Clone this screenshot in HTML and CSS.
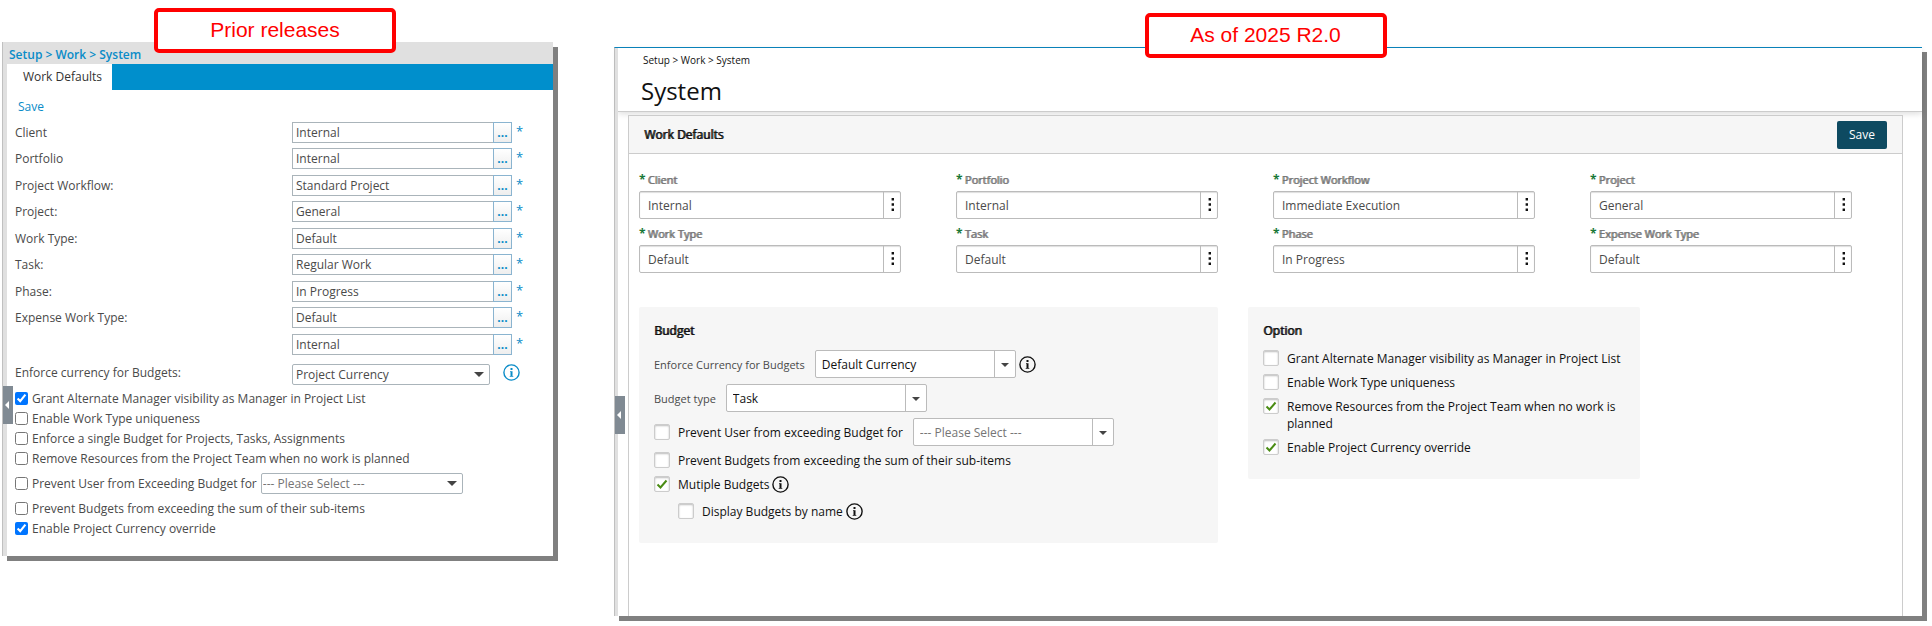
FILE: index.html
```
<!DOCTYPE html>
<html lang="en">
<head>
<meta charset="utf-8">
<title>Work Defaults: release comparison</title>
<link rel="stylesheet" href="styles.css">
</head>
<body>
<svg class="sprite" aria-hidden="true">
  <symbol id="info" viewBox="0 0 17 17">
    <circle cx="8.5" cy="8.5" r="7.600" fill="none" stroke="currentColor" stroke-width="1.4"/>
    <path d="M7.500 4h2v2h-2zM7 7.300h2.500v4.700h.8v.8H6.700V12h.8V8.100H7z" fill="currentColor"/>
  </symbol>
  <symbol id="dots" viewBox="0 0 4 14">
    <path d="M.6 0h2.4v2.6H.6zM.6 5.2h2.4v2.6H.6zM.6 10.4h2.4v2.6H.6z" fill="currentColor"/>
  </symbol>
  <symbol id="left" viewBox="0 0 4 8"><path d="M4 0v8L0 4z" fill="currentColor"/></symbol>
</svg>
<main class="compare">
  <section class="panel old">
    <div class="callout-row"><strong class="callout">Prior releases</strong></div>
    <button class="handle" aria-label="Expand menu"><svg width="4" height="8"><use href="#left"/></svg></button>
    <nav class="old-crumbs">Setup &gt; Work &gt; System</nav>
    <div class="tabs"><button class="tab">Work Defaults</button></div>
    <form class="old-form">
      <a class="save-link" href="#save">Save</a>
      <div class="old-fields">
        <label for="o1">Client</label><div class="old-lookup"><input id="o1" value="Internal"><button type="button" aria-label="Browse clients">...</button><span>*</span></div>
        <label for="o2">Portfolio</label><div class="old-lookup"><input id="o2" value="Internal"><button type="button" aria-label="Browse portfolios">...</button><span>*</span></div>
        <label for="o3">Project Workflow:</label><div class="old-lookup"><input id="o3" value="Standard Project"><button type="button" aria-label="Browse workflows">...</button><span>*</span></div>
        <label for="o4">Project:</label><div class="old-lookup"><input id="o4" value="General"><button type="button" aria-label="Browse projects">...</button><span>*</span></div>
        <label for="o5">Work Type:</label><div class="old-lookup"><input id="o5" value="Default"><button type="button" aria-label="Browse work types">...</button><span>*</span></div>
        <label for="o6">Task:</label><div class="old-lookup"><input id="o6" value="Regular Work"><button type="button" aria-label="Browse tasks">...</button><span>*</span></div>
        <label for="o7">Phase:</label><div class="old-lookup"><input id="o7" value="In Progress"><button type="button" aria-label="Browse phases">...</button><span>*</span></div>
        <label for="o8">Expense Work Type:</label><div class="old-lookup"><input id="o8" value="Default"><button type="button" aria-label="Browse expense work types">...</button><span>*</span></div>
        <span></span><div class="old-lookup"><input aria-label="Expense owner" value="Internal"><button type="button" aria-label="Browse owners">...</button><span>*</span></div>
      </div>
      <div class="old-currency">
        <label for="o10">Enforce currency for Budgets:</label>
        <select id="o10" class="old-select"><option>Project Currency</option></select>
        <svg class="info blue" width="17" height="17"><use href="#info"/></svg>
      </div>
      <div class="old-checks">
        <label><input type="checkbox" checked>Grant Alternate Manager visibility as Manager in Project List</label>
        <label><input type="checkbox">Enable Work Type uniqueness</label>
        <label><input type="checkbox">Enforce a single Budget for Projects, Tasks, Assignments</label>
        <label><input type="checkbox">Remove Resources from the Project Team when no work is planned</label>
        <div class="old-limit"><label><input type="checkbox">Prevent User from Exceeding Budget for</label>
          <select class="old-select empty" aria-label="Budget limit"><option>--- Please Select ---</option></select></div>
        <label><input type="checkbox">Prevent Budgets from exceeding the sum of their sub-items</label>
        <label><input type="checkbox" checked>Enable Project Currency override</label>
      </div>
    </form>
  </section>

  <section class="panel new">
    <div class="callout-row"><strong class="callout">As of 2025 R2.0</strong></div>
    <button class="handle" aria-label="Expand menu"><svg width="4" height="8"><use href="#left"/></svg></button>
    <header class="page-head">
      <nav class="crumbs">Setup &gt; Work &gt; System</nav>
      <h1>System</h1>
    </header>
    <form class="card">
      <div class="card-head"><h2>Work Defaults</h2><button type="button" class="save">Save</button></div>
      <div class="fields">
        <div class="field"><label for="n1"><b>*</b>Client</label><div class="lookup"><input id="n1" value="Internal"><button type="button" aria-label="Browse clients"><svg width="4" height="14"><use href="#dots"/></svg></button></div></div>
        <div class="field"><label for="n2"><b>*</b>Portfolio</label><div class="lookup"><input id="n2" value="Internal"><button type="button" aria-label="Browse portfolios"><svg width="4" height="14"><use href="#dots"/></svg></button></div></div>
        <div class="field"><label for="n3"><b>*</b>Project Workflow</label><div class="lookup"><input id="n3" value="Immediate Execution"><button type="button" aria-label="Browse workflows"><svg width="4" height="14"><use href="#dots"/></svg></button></div></div>
        <div class="field"><label for="n4"><b>*</b>Project</label><div class="lookup"><input id="n4" value="General"><button type="button" aria-label="Browse projects"><svg width="4" height="14"><use href="#dots"/></svg></button></div></div>
        <div class="field"><label for="n5"><b>*</b>Work Type</label><div class="lookup"><input id="n5" value="Default"><button type="button" aria-label="Browse work types"><svg width="4" height="14"><use href="#dots"/></svg></button></div></div>
        <div class="field"><label for="n6"><b>*</b>Task</label><div class="lookup"><input id="n6" value="Default"><button type="button" aria-label="Browse tasks"><svg width="4" height="14"><use href="#dots"/></svg></button></div></div>
        <div class="field"><label for="n7"><b>*</b>Phase</label><div class="lookup"><input id="n7" value="In Progress"><button type="button" aria-label="Browse phases"><svg width="4" height="14"><use href="#dots"/></svg></button></div></div>
        <div class="field"><label for="n8"><b>*</b>Expense Work Type</label><div class="lookup"><input id="n8" value="Default"><button type="button" aria-label="Browse expense work types"><svg width="4" height="14"><use href="#dots"/></svg></button></div></div>
      </div>
      <div class="boxes">
        <section class="box">
          <h3>Budget</h3>
          <div class="line"><label for="b1">Enforce Currency for Budgets</label><select id="b1" class="select"><option>Default Currency</option></select><svg class="info" width="17" height="17"><use href="#info"/></svg></div>
          <div class="line"><label for="b2">Budget type</label><select id="b2" class="select"><option>Task</option></select></div>
          <div class="line"><label class="check"><input type="checkbox">Prevent User from exceeding Budget for</label><select class="select empty" aria-label="Budget limit"><option>--- Please Select ---</option></select></div>
          <div class="checks">
            <label class="check"><input type="checkbox">Prevent Budgets from exceeding the sum of their sub-items</label>
            <div class="with-info"><label class="check"><input type="checkbox" checked>Mutiple Budgets</label><svg class="info" width="17" height="17"><use href="#info"/></svg></div>
            <div class="with-info nested"><label class="check"><input type="checkbox">Display Budgets by name</label><svg class="info" width="17" height="17"><use href="#info"/></svg></div>
          </div>
        </section>
        <section class="box">
          <h3>Option</h3>
          <div class="checks">
            <label class="check"><input type="checkbox">Grant Alternate Manager visibility as Manager in Project List</label>
            <label class="check"><input type="checkbox">Enable Work Type uniqueness</label>
            <label class="check"><input type="checkbox" checked>Remove Resources from the Project Team when no work is planned</label>
            <label class="check"><input type="checkbox" checked>Enable Project Currency override</label>
          </div>
        </section>
      </div>
    </form>
  </section>
</main>
</body>
</html>
```
FILE: styles.css
```
* { box-sizing: border-box; }
body { margin: 0; background: #fff; font-family: "Open Sans", sans-serif; font-size: 12px; color: #4a4a4a; }
input, button, select { font: inherit; color: inherit; margin: 0; border-radius: 0; }
h1, h2, h3 { margin: 0; }
.sprite { position: absolute; width: 0; height: 0; }
svg { display: block; flex: none; }

.compare { display: grid; grid-template-columns: 551fr 1308fr; gap: 61px; align-items: start; padding: 42px 10px 10px 2px; }
.panel { position: relative; border-left: 1px solid #c0c0c0; background: #fff; box-shadow: 5px 5px 0 #808080; }

.callout-row { position: absolute; top: -34px; left: -6px; right: 0; display: flex; justify-content: center; z-index: 2; }
.new .callout-row { top: -35px; }
.callout { min-width: 242px; padding: 0 40px 2px; border: 4px solid #f00; border-radius: 5px; background: #fff; color: #f00; font: 21px/35px "Liberation Sans", sans-serif; text-align: center; }
.handle { position: absolute; left: 0; width: 10px; height: 38px; padding: 0 0 0 2px; border: 0; background: #808a93; color: #fff; display: flex; align-items: center; z-index: 1; }

/* Earlier layout */
.old { padding: 0 0 18px; }
.old::before, .new::before { content: ""; position: absolute; left: 0; top: 0; bottom: 0; width: 4px; background: #e0e0e0; }
.new::before { width: 3px; }
.old .handle { top: 344px; }
.old-crumbs { padding: 4px 6px 0; height: 22px; background: #e0e0e0; color: #0a8cc8; font-weight: 600; line-height: 18px; }
.tabs { display: flex; margin-left: 4px; height: 26px; background: #008fcc; }
.tab { width: 105px; padding: 0 0 0 6px; border: 0; background: #fff; color: #333; line-height: 26px; }
.old-form { padding: 8px 11px 0 12px; }
.save-link { display: block; padding-left: 3px; color: #0a8cc8; text-decoration: none; line-height: 18px; }
.old-fields { display: grid; grid-template-columns: 277px 1fr; grid-auto-rows: 26px 27px; padding-top: 6px; }
.old-fields label { line-height: 22px; }
.old-lookup { display: flex; height: 21px; }
.old-lookup input { width: 202px; padding: 0 3px; border: 1px solid #aab4ba; }
.old-lookup button { width: 19px; margin-left: -1px; padding: 0; border: 1px solid #8ab4d0; background: linear-gradient(#fff, #eee); color: #0a8cc8; font-weight: 700; line-height: 19px; }
.old-lookup span { padding-left: 4px; color: #0a8cc8; font-size: 13px; line-height: 18px; }
.old-currency { display: grid; grid-template-columns: 277px 198px auto; align-items: center; margin-top: 4px; }
.old-currency .info { margin-left: 13px; margin-bottom: 4px; }
.old-currency label { padding-bottom: 4px; }
.old-select { appearance: none; width: 100%; height: 21px; padding: 0 3px; border: 1px solid #aab4ba; border-radius: 2px; background: #fff url("data:image/svg+xml,%3Csvg xmlns='http://www.w3.org/2000/svg' width='10' height='5'%3E%3Cpath d='M0 0h10L5 5z' fill='%23444'/%3E%3C/svg%3E") no-repeat right 5px center; }
.old-checks { padding-top: 3px; }
.old-checks label { display: flex; align-items: center; gap: 4px; height: 20px; }
.old-checks input { width: 13px; height: 13px; flex: none; }
.old-limit { display: flex; align-items: center; gap: 4px; height: 30px; }
.old-limit .old-select { width: 202px; padding-left: 1px; }
.old-select.empty, .select.empty { color: #757575; }

/* Current layout */
.new { display: flex; flex-direction: column; margin-top: 5px; min-height: 569px; padding-left: 3px; border-top: 1px solid #0a85bf; }
.new .handle { top: 348px; }
.page-head { height: 64px; padding: 5px 23px 0; border-bottom: 1px solid #ccc; box-shadow: 0 2px 6px #0002; color: #111; }
.crumbs { font-size: 10px; line-height: 14px; padding-left: 2px; }
h1 { font-weight: 400; font-size: 24px; line-height: 32px; padding-top: 8px; }
.card { position: relative; flex: 1; display: flex; flex-direction: column; margin: 3px 19px 0 10px; border: 1px solid #ccc; border-bottom: 0; background: #fff; }
.card-head { display: flex; align-items: center; justify-content: space-between; height: 38px; padding: 0 15px; border-bottom: 1px solid #ccc; background: #f6f6f6; }
h2, h3 { color: #111; font-size: 12px; line-height: 18px; font-weight: 400; text-shadow: 1px 0 0 #111; }
.save { width: 50px; height: 28px; padding: 0; border: 0; border-radius: 2px; background: #0e4a61; color: #fff; font-size: 12px; }
.fields { display: grid; grid-template-columns: repeat(4, 1fr); gap: 8px 55px; padding: 19px 50px 34px 10px; }
.field label { display: block; height: 18px; color: #777; font-size: 11px; line-height: 14px; text-shadow: 1px 0 0 #777; }
.field b { margin-right: 2px; color: #187838; font-size: 12px; text-shadow: none; }
.lookup { display: flex; height: 28px; border: 1px solid #bbb; border-radius: 2px; background: #fff; box-shadow: inset 0 1px 1px #0002; }
.lookup input { flex: 1; min-width: 0; padding: 0 8px; border: 0; background: none; }
.lookup button { display: grid; place-items: center; width: 17px; padding: 0 0 0 1px; border: 0; border-left: 1px solid #bbb; background: none; color: #111; }
.boxes { display: grid; grid-template-columns: 579fr 392fr; gap: 30px; align-items: start; padding: 0 262px 0 10px; }
.box { padding: 15px 15px 23px; border-radius: 2px; background: #f6f6f6; }
.box h3 { margin-bottom: 10px; }
.line { display: flex; align-items: center; height: 28px; margin-bottom: 6px; }
.line label { margin-right: 10px; font-size: 11px; }
.select { appearance: none; width: 201px; height: 28px; padding: 0 6px; border: 1px solid #bbb; border-radius: 2px; color: #111; background: url("data:image/svg+xml,%3Csvg xmlns='http://www.w3.org/2000/svg' width='21' height='26'%3E%3Cpath d='M0 0h1v26H0z' fill='%23bbb'/%3E%3Cpath d='M7 12h8l-4 4z' fill='%23444'/%3E%3C/svg%3E") no-repeat right top #fff; }
.info { margin-left: 3px; color: #111; }
.info.blue { color: #0a8cc8; }
.checks { display: grid; gap: 7px; }
.check, .line .check { display: flex; align-items: flex-start; gap: 8px; color: #111; font-size: 12px; line-height: 17px; }
.check input { appearance: none; flex: none; width: 16px; height: 16px; border: 1px solid #ccc; border-radius: 2px; background: #fff; box-shadow: inset 0 1px 2px #0004; }
.check input:checked { background: #fff url("data:image/svg+xml,%3Csvg xmlns='http://www.w3.org/2000/svg' width='12' height='12'%3E%3Cpath d='M1.500 6.500l3 3L10.500 2.500' fill='none' stroke='%234a8c14' stroke-width='2'/%3E%3C/svg%3E") center no-repeat; }
.with-info { display: flex; align-items: center; }
.nested { padding: 3px 0 0 24px; }
```
